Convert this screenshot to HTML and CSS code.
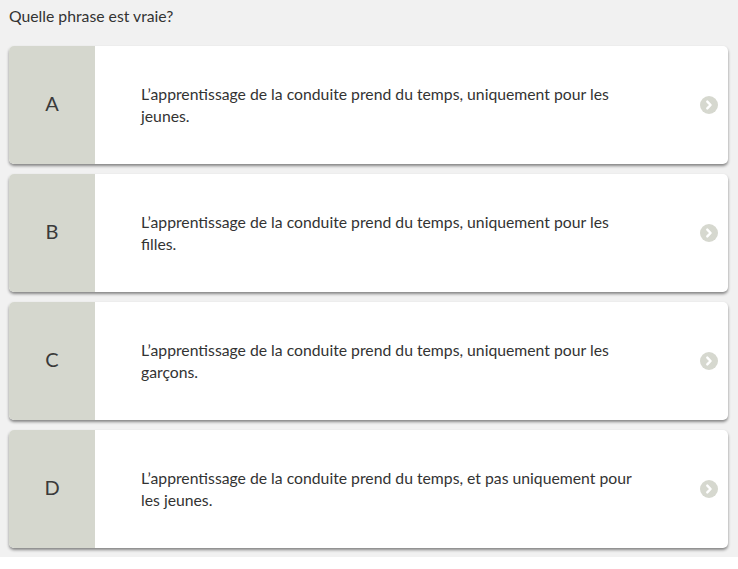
FILE: index.html
```html
<!DOCTYPE html>
<html lang="fr">
<head>
<meta charset="utf-8">
<link rel="stylesheet" href="styles.css">
</head>
<body>
<div class="page">
  <p class="question">Quelle phrase est vraie?</p>
  <div class="answers">
    <div class="card">
      <div class="letter">A</div>
      <div class="text">L’apprentissage de la conduite prend du temps, uniquement pour les jeunes.</div>
      <div class="arrow"><svg width="18" height="18" viewBox="0 0 18 18"><circle cx="9" cy="9" r="9" fill="#d6d8cf"/><path d="M7.3 5.6 L10.6 9 L7.3 12.4" fill="none" stroke="#fff" stroke-width="2.4" stroke-linecap="round" stroke-linejoin="round"/></svg></div>
    </div>
    <div class="card">
      <div class="letter">B</div>
      <div class="text">L’apprentissage de la conduite prend du temps, uniquement pour les filles.</div>
      <div class="arrow"><svg width="18" height="18" viewBox="0 0 18 18"><circle cx="9" cy="9" r="9" fill="#d6d8cf"/><path d="M7.3 5.6 L10.6 9 L7.3 12.4" fill="none" stroke="#fff" stroke-width="2.4" stroke-linecap="round" stroke-linejoin="round"/></svg></div>
    </div>
    <div class="card">
      <div class="letter">C</div>
      <div class="text">L’apprentissage de la conduite prend du temps, uniquement pour les garçons.</div>
      <div class="arrow"><svg width="18" height="18" viewBox="0 0 18 18"><circle cx="9" cy="9" r="9" fill="#d6d8cf"/><path d="M7.3 5.6 L10.6 9 L7.3 12.4" fill="none" stroke="#fff" stroke-width="2.4" stroke-linecap="round" stroke-linejoin="round"/></svg></div>
    </div>
    <div class="card">
      <div class="letter">D</div>
      <div class="text">L’apprentissage de la conduite prend du temps, et pas uniquement pour les jeunes.</div>
      <div class="arrow"><svg width="18" height="18" viewBox="0 0 18 18"><circle cx="9" cy="9" r="9" fill="#d6d8cf"/><path d="M7.3 5.6 L10.6 9 L7.3 12.4" fill="none" stroke="#fff" stroke-width="2.4" stroke-linecap="round" stroke-linejoin="round"/></svg></div>
    </div>
  </div>
</div>
</body>
</html>
```
FILE: styles.css
```css
html, body {
  margin: 0;
  padding: 0;
  background: #ffffff;
}
body {
  font-family: Lato, "Open Sans", sans-serif;
  color: #333333;
}
.page {
  background: #f1f1f1;
  height: 557px;
  padding: 6px 9px 0 9px;
  box-sizing: border-box;
}
.question {
  margin: 0;
  font-size: 15.75px;
  line-height: 20px;
  color: #333333;
}
.answers {
  margin-top: 20px;
  display: flex;
  flex-direction: column;
  gap: 10px;
  width: 719px;
}
.card {
  display: flex;
  align-items: center;
  height: 118px;
  background: #ffffff;
  border-radius: 5px;
  overflow: hidden;
  box-shadow: 0 2px 3px rgba(0, 0, 0, 0.45);
}
.letter {
  width: 86px;
  align-self: stretch;
  display: flex;
  align-items: center;
  justify-content: center;
  background: #d5d7ce;
  font-size: 20px;
  color: #3a3a3a;
  padding-bottom: 4px;
  box-sizing: border-box;
}
.text {
  width: 500px;
  padding-left: 46px;
  font-size: 15.75px;
  line-height: 22px;
  color: #333333;
}
.arrow {
  margin-left: auto;
  margin-right: 10px;
  display: flex;
}
```
